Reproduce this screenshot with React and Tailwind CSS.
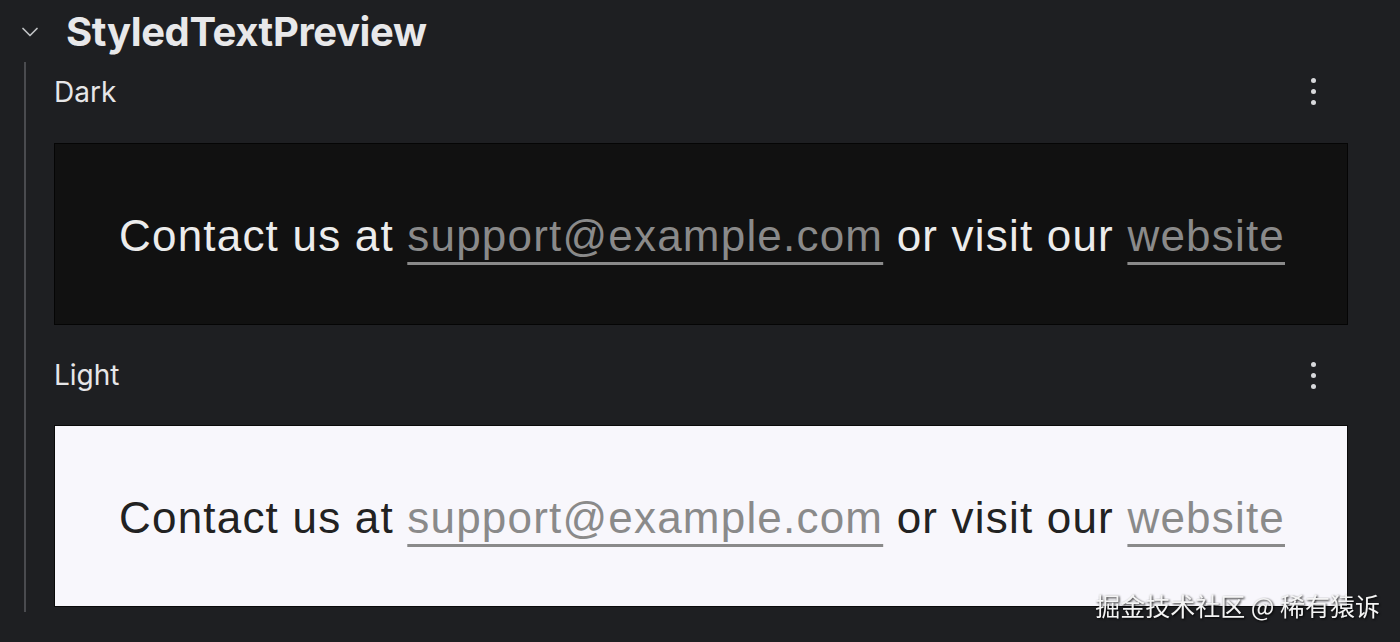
import { ChevronDown } from "lucide-react";

const Dots = () => (
  <div className="flex flex-col items-center gap-[6px] w-[10px] mr-[30px]">
    <span className="w-[5px] h-[5px] rounded-full bg-[#d8d9dc]" />
    <span className="w-[5px] h-[5px] rounded-full bg-[#d8d9dc]" />
    <span className="w-[5px] h-[5px] rounded-full bg-[#d8d9dc]" />
  </div>
);

const Sample = ({ dark }) => (
  <div
    className={`h-[182px] border flex items-center justify-center ${
      dark ? "bg-[#111111] border-[#050505] text-[#ececec]" : "bg-[#f8f7fc] border-[#0a0a0a] text-[#222222]"
    }`}
  >
    <p className="text-[44px] tracking-[1.2px] pl-[2px] pt-[4px]" style={{ fontFamily: "'Liberation Sans', Arial, sans-serif" }}>
      Contact us at{" "}
      <span className="text-[#8a8a8a] underline decoration-[3px] underline-offset-[11px] [text-decoration-skip-ink:none]">support@example.com</span>{" "}
      or visit our{" "}
      <span className="text-[#8a8a8a] underline decoration-[3px] underline-offset-[11px] [text-decoration-skip-ink:none]">website</span>
    </p>
  </div>
);

export default function App() {
  return (
    <div className="w-[1400px] h-[642px] bg-[#1e1f22] overflow-hidden relative" style={{ fontFamily: "Inter, sans-serif" }}>
      <div className="flex items-center h-[62px] pl-[16px] pt-[2px]">
        <ChevronDown size={28} strokeWidth={1.5} className="text-[#bfc0c4]" />
        <h1 className="ml-[22px] text-[40px] font-bold text-[#e8e8ea] tracking-[-0.4px]">StyledTextPreview</h1>
      </div>
      <div className="ml-[24px] border-l-2 border-[#4a4b4f] h-[550px] pl-[28px] pr-[52px]">
        <div className="flex items-center justify-between h-[56px] pt-[3px]">
          <span className="text-[28px] text-[#e6e6e8]">Dark</span>
          <Dots />
        </div>
        <div className="pt-[25px]">
          <Sample dark />
        </div>
        <div className="flex items-center justify-between h-[100px]">
          <span className="text-[28px] text-[#e6e6e8]">Light</span>
          <Dots />
        </div>
        <Sample />
      </div>
      <div
        className="absolute right-[20px] bottom-[18px] text-[25px] text-[#f4f4f4] drop-shadow-[1px_1px_1px_rgba(0,0,0,0.9)]"
        style={{ fontFamily: "'Noto Sans CJK SC', sans-serif" }}
      >
        掘金技术社区 @ 稀有猿诉
      </div>
    </div>
  );
}
